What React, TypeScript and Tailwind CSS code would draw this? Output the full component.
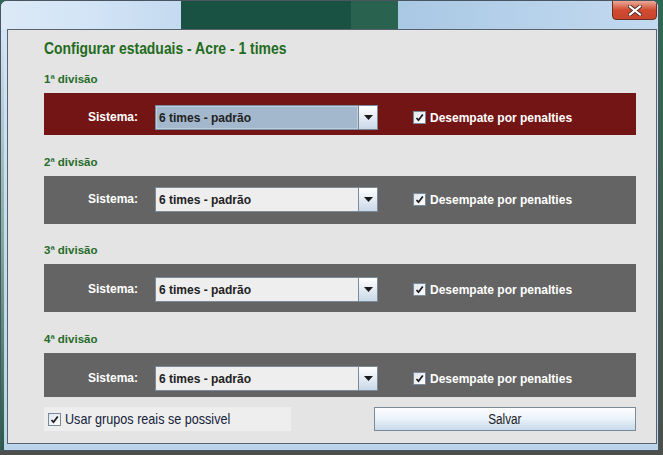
const arial = "font-['Liberation_Sans',Arial,sans-serif]";

const divisions = [
  { label: '1ª divisão', band: 'bg-[#741515] h-[42px] pt-[12px]', selected: true, top: 'mt-[14px]' },
  { label: '2ª divisão', band: 'bg-[#646464] h-[48px] pt-[11px]', selected: false, top: 'mt-[20px]' },
  { label: '3ª divisão', band: 'bg-[#646464] h-[48px] pt-[13px]', selected: false, top: 'mt-[19px]' },
  { label: '4ª divisão', band: 'bg-[#646464] h-[44px] pt-[13px]', selected: false, top: 'mt-[20px]' },
];

function CheckBox() {
  return (
    <span className="flex h-[13px] w-[13px] shrink-0 items-center justify-center border border-[#7a8a99] bg-gradient-to-br from-[#dfe6ee] to-[#ffffff]">
      <svg width="9" height="9" viewBox="0 0 9 9">
        <path d="M1.5 5 L3.5 7.2 L7.8 1.5" fill="none" stroke="#1e1e1e" strokeWidth="1.8" />
      </svg>
    </span>
  );
}

function Combo({ selected }: { selected: boolean }) {
  return (
    <div className="flex h-[25px] w-[223px] border border-[#7a8a99]">
      <div
        className={
          selected
            ? 'flex flex-1 items-center border border-[#bdd0e3] bg-[#a3b8cc] pl-[2px]'
            : 'flex flex-1 items-center bg-[#eeeeee] pl-[3px]'
        }
      >
        <span className={`${arial} text-[12px] font-bold text-[#222222]`}>6 times - padrão</span>
      </div>
      <div className="flex w-[19px] items-center justify-center border-l border-[#7a8a99] bg-gradient-to-b from-[#ffffff] to-[#c9d8e8]">
        <svg width="9" height="5" viewBox="0 0 9 5">
          <path d="M0 0 H9 L4.5 5 Z" fill="#1b1b1b" />
        </svg>
      </div>
    </div>
  );
}

function Division({ d }: { d: (typeof divisions)[number] }) {
  return (
    <div className={d.top}>
      <p className={`${arial} h-[14px] text-[11.5px] font-bold leading-[14px] text-[#276b2a]`}>{d.label}</p>
      <div className={`mt-[7px] flex items-start pl-[44px] ${d.band}`}>
        <span className={`${arial} w-[67px] text-[12px] font-bold leading-[25px] text-white`}>Sistema:</span>
        <Combo selected={d.selected} />
        <div className="ml-[35px] flex h-[25px] items-center gap-[4px]">
          <CheckBox />
          <span className={`${arial} text-[12px] font-bold text-white`}>Desempate por penalties</span>
        </div>
      </div>
    </div>
  );
}

export default function App() {
  return (
    <div className="relative h-[455px] w-[663px] overflow-hidden bg-gradient-to-b from-[#2c6a55] to-[#4b504d]">
      <div className="absolute left-0 top-0 h-[451px] w-[659px] overflow-hidden rounded-t-[7px] border border-[#4a5560] bg-gradient-to-b from-[#d3e5f7] to-[#bcd4ea]">
        {/* blurred desktop behind the glass title bar */}
        <div className="absolute left-0 top-0 h-[29px] w-[180px] bg-gradient-to-r from-[#dce9f6] via-[#d2e4f6] to-[#c4daf0]" />
        <div className="absolute left-[180px] top-0 h-[29px] w-[217px] bg-[#195243]" />
        <div className="absolute left-[350px] top-0 h-[29px] w-[47px] bg-[#2a6250]" />
        <div className="absolute left-[397px] top-0 h-[29px] w-[262px] bg-gradient-to-r from-[#a9c8e4] to-[#c3daf0]" />
        <div className="absolute left-[0px] top-[40px] h-[410px] w-[3px] bg-gradient-to-b from-[#cfe0f2] via-[#7fa89a] to-[#235c47]" />

        <div className="absolute right-[1px] top-[-1px] flex h-[20px] w-[45px] items-center justify-center rounded-b-[4px] border border-[#6b2f25] bg-gradient-to-b from-[#e9a796] via-[#d04a31] to-[#c8452d]">
          <svg width="14" height="11" viewBox="0 0 14 11">
            <path d="M2 1.5 L12 9.5 M12 1.5 L2 9.5" stroke="#4a2a22" strokeWidth="4" strokeLinecap="square" />
            <path d="M2 1.5 L12 9.5 M12 1.5 L2 9.5" stroke="#ffffff" strokeWidth="2.2" strokeLinecap="square" />
          </svg>
        </div>

        <div className="absolute left-[6px] top-[28px] h-[415px] w-[650px] border border-[#58636d] bg-[#e3e4e3] pl-[36px] pr-[20px]">
          <h1 className={`${arial} mt-[9px] h-[19px] origin-left scale-x-[0.87] whitespace-nowrap text-[16px] font-bold leading-[19px] text-[#1f6b21]`}>
            Configurar estaduais - Acre - 1 times
          </h1>

          {divisions.map((d) => (
            <Division key={d.label} d={d} />
          ))}

          <div className="mt-[10px] flex items-center justify-between">
            <div className="flex h-[24px] w-[247px] items-center gap-[4px] bg-[#eeeeee] pl-[4px]">
              <CheckBox />
              <span className={`${arial} inline-block origin-left scale-x-[0.84] whitespace-nowrap text-[15px] text-[#15223a]`}>
                Usar grupos reais se possivel
              </span>
            </div>
            <button className="flex h-[24px] w-[262px] items-center justify-center border border-[#7a8a99] bg-gradient-to-b from-[#fdfeff] via-[#eaf2fa] to-[#c8d9ea]">
              <span className={`${arial} inline-block scale-x-[0.84] text-[14px] text-[#1b1b1b]`}>Salvar</span>
            </button>
          </div>
        </div>
      </div>
    </div>
  );
}
